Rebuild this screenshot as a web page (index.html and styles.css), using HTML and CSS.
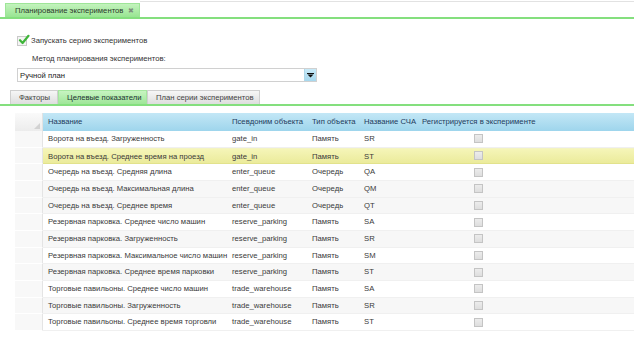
FILE: index.html
```html
<!DOCTYPE html>
<html lang="ru">
<head>
<meta charset="utf-8">
<link rel="stylesheet" href="styles.css">
</head>
<body>
<div class="page">
  <div class="doc-strip">
    <div class="doc-tab">
      <span>Планирование экспериментов</span>
      <span class="doc-close">✖</span>
    </div>
    <div class="doc-rest"></div>
  </div>

  <div class="form">
    <div class="check-row">
      <span class="cbox">
        <svg width="12" height="12" viewBox="0 0 12 12"><path d="M2 6.2 L4.6 9 L10.5 1.8" fill="none" stroke="#3fb53a" stroke-width="2.2" stroke-linecap="round" stroke-linejoin="round"/></svg>
      </span>
      <span class="check-label">Запускать серию экспериментов</span>
    </div>
    <div class="method-label">Метод планирования экспериментов:</div>
    <div class="select">
      <span class="select-text">Ручной план</span>
      <span class="select-btn"><svg width="7" height="5" viewBox="0 0 7 5"><rect x="0" y="0" width="7" height="1" fill="#111"/><path d="M0.5 1.5 H6.5 L3.5 4.5 Z" fill="#111"/></svg></span>
    </div>
  </div>

  <div class="tabs">
    <div class="tab t1">Факторы</div>
    <div class="tab t2 active">Целевые показатели</div>
    <div class="tab t3">План серии экспериментов</div>
  </div>

  <div class="grid">
    <div class="hrow">
      <div class="corner"><span class="grip"></span></div>
      <div class="hc">Название</div>
      <div class="hc">Псевдоним объекта</div>
      <div class="hc">Тип объекта</div>
      <div class="hc">Название СЧА</div>
      <div class="hc">Регистрируется в эксперименте</div>
    </div>
    <div class="row"><div class="rh"></div><div class="c">Ворота на въезд. Загруженность</div><div class="c">gate_in</div><div class="c">Память</div><div class="c">SR</div><div class="c cc"><span class="rb"></span></div></div>
    <div class="row sel"><div class="rh"></div><div class="c">Ворота на въезд. Среднее время на проезд</div><div class="c">gate_in</div><div class="c">Память</div><div class="c">ST</div><div class="c cc"><span class="rb"></span></div></div>
    <div class="row"><div class="rh"></div><div class="c">Очередь на въезд. Средняя длина</div><div class="c">enter_queue</div><div class="c">Очередь</div><div class="c">QA</div><div class="c cc"><span class="rb"></span></div></div>
    <div class="row alt"><div class="rh"></div><div class="c">Очередь на въезд. Максимальная длина</div><div class="c">enter_queue</div><div class="c">Очередь</div><div class="c">QM</div><div class="c cc"><span class="rb"></span></div></div>
    <div class="row alt"><div class="rh"></div><div class="c">Очередь на въезд. Среднее время</div><div class="c">enter_queue</div><div class="c">Очередь</div><div class="c">QT</div><div class="c cc"><span class="rb"></span></div></div>
    <div class="row"><div class="rh"></div><div class="c">Резервная парковка. Среднее число машин</div><div class="c">reserve_parking</div><div class="c">Память</div><div class="c">SA</div><div class="c cc"><span class="rb"></span></div></div>
    <div class="row alt"><div class="rh"></div><div class="c">Резервная парковка. Загруженность</div><div class="c">reserve_parking</div><div class="c">Память</div><div class="c">SR</div><div class="c cc"><span class="rb"></span></div></div>
    <div class="row"><div class="rh"></div><div class="c">Резервная парковка. Максимальное число машин</div><div class="c">reserve_parking</div><div class="c">Память</div><div class="c">SM</div><div class="c cc"><span class="rb"></span></div></div>
    <div class="row alt"><div class="rh"></div><div class="c">Резервная парковка. Среднее время парковки</div><div class="c">reserve_parking</div><div class="c">Память</div><div class="c">ST</div><div class="c cc"><span class="rb"></span></div></div>
    <div class="row"><div class="rh"></div><div class="c">Торговые павильоны. Среднее число машин</div><div class="c">trade_warehouse</div><div class="c">Память</div><div class="c">SA</div><div class="c cc"><span class="rb"></span></div></div>
    <div class="row alt"><div class="rh"></div><div class="c">Торговые павильоны. Загруженность</div><div class="c">trade_warehouse</div><div class="c">Память</div><div class="c">SR</div><div class="c cc"><span class="rb"></span></div></div>
    <div class="row"><div class="rh"></div><div class="c">Торговые павильоны. Среднее время торговли</div><div class="c">trade_warehouse</div><div class="c">Память</div><div class="c">ST</div><div class="c cc"><span class="rb"></span></div></div>
  </div>
</div>
</body>
</html>
```

FILE: styles.css
```css
* { box-sizing: border-box; }
html, body { margin: 0; padding: 0; background: #fff; }
body {
  font-family: "Liberation Sans", Arial, sans-serif;
  font-size: 7.7px;
  color: #333;
}
.page { width: 634px; height: 341px; overflow: hidden; }

.doc-strip {
  display: flex;
  align-items: flex-end;
  padding-top: 3px;
  padding-left: 5px;
  border-bottom: 2px solid #84df7e;
}
.doc-tab {
  width: 135px;
  height: 14px;
  display: flex;
  align-items: center;
  justify-content: space-between;
  padding: 0 5px 0 9px;
  background: linear-gradient(#c3f3bd, #98e592);
  border: 1px solid #9ee598;
  border-bottom: none;
  color: #2a3a2a;
  white-space: nowrap;
}
.doc-close { color: #7d8f7d; font-size: 7px; }
.doc-rest { flex: 1; height: 16px; border-top: 1px solid #e2e2e2; align-self: flex-start; margin-top: -2px; }

.form { padding-left: 17px; }
.check-row {
  display: flex;
  align-items: center;
  gap: 4px;
  margin-top: 16px;
  height: 11px;
}
.cbox {
  width: 10px;
  height: 10px;
  border: 1px solid #c9c9c9;
  background: #f4f4f4;
  position: relative;
}
.cbox svg { position: absolute; left: 0; top: -3px; }
.method-label { margin-top: 7px; padding-left: 15px; height: 11px; line-height: 11px; }
.select {
  margin-top: 4px;
  width: 300px;
  height: 14px;
  border: 1px solid #d0d0d0;
  display: flex;
  align-items: center;
  justify-content: space-between;
}
.select-text { padding-left: 2px; color: #222; }
.select-btn {
  width: 12px;
  height: 12px;
  background: linear-gradient(#c8eaf8, #a6d8ee);
  display: flex;
  align-items: center;
  justify-content: center;
  border-left: 1px solid #b0d8ea;
}

.tabs {
  display: flex;
  margin-top: 8px;
  padding-left: 10px;
  border-bottom: 2px solid #84df7e;
}
.tab {
  height: 14px;
  line-height: 13px;
  padding: 0 0 0 8px;
  background: linear-gradient(#f6f6f6, #dedede);
  border: 1px solid #cfcfcf;
  border-bottom: none;
  color: #444;
  white-space: nowrap;
  overflow: hidden;
}
.t1 { width: 48px; padding-left: 8px; }
.t2 { width: 89px; }
.t3 { width: 113px; }
.tab.active {
  background: linear-gradient(#c7f4c1, #9fe699);
  border-color: #a5e69f;
  color: #233;
}

.grid { margin-top: 7px; margin-left: 15px; }
.hrow, .row {
  display: grid;
  grid-template-columns: 28px 185px 80px 52px 58px 1fr;
}
.hrow { height: 18px; }
.corner {
  background: linear-gradient(#fafafa, #ececec);
  border-right: 1px solid #e2e2e2;
  position: relative;
}
.grip {
  position: absolute;
  right: 2px;
  bottom: 2px;
  width: 0; height: 0;
  border-left: 6px solid transparent;
  border-bottom: 6px solid #d2d2d2;
}
.hc {
  background: linear-gradient(#c3e7f6, #9ed5ec);
  color: #1d3b5c;
  line-height: 18px;
  padding-left: 4px;
  white-space: nowrap;
}
.hrow .hc:nth-child(2) { padding-left: 5px; }
.row { height: 16.67px; }
.c {
  line-height: 16px;
  padding-left: 4px;
  white-space: nowrap;
  overflow: hidden;
  border-bottom: 1px solid #f0f0f0;
  color: #3a3a3a;
}
.row .c:nth-child(2) { padding-left: 5px; }
.rh {
  background: #f8f8f8;
  border-right: 1px solid #e4e4e4;
  border-bottom: 1px solid #fff;
}
.row.alt .c { background: #f7f7f7; }
.row.sel .c {
  background: linear-gradient(#f5f5b8, #ebeb9b);
  border-bottom-color: #e2e28c;
  border-top: 1px solid #f3f3c2;
}
.cc { padding-left: 56px; display: flex; align-items: center; }
.rb {
  width: 9px;
  height: 9px;
  border: 1px solid #c4c4c4;
  background: linear-gradient(#ececec, #dedede);
}
```
